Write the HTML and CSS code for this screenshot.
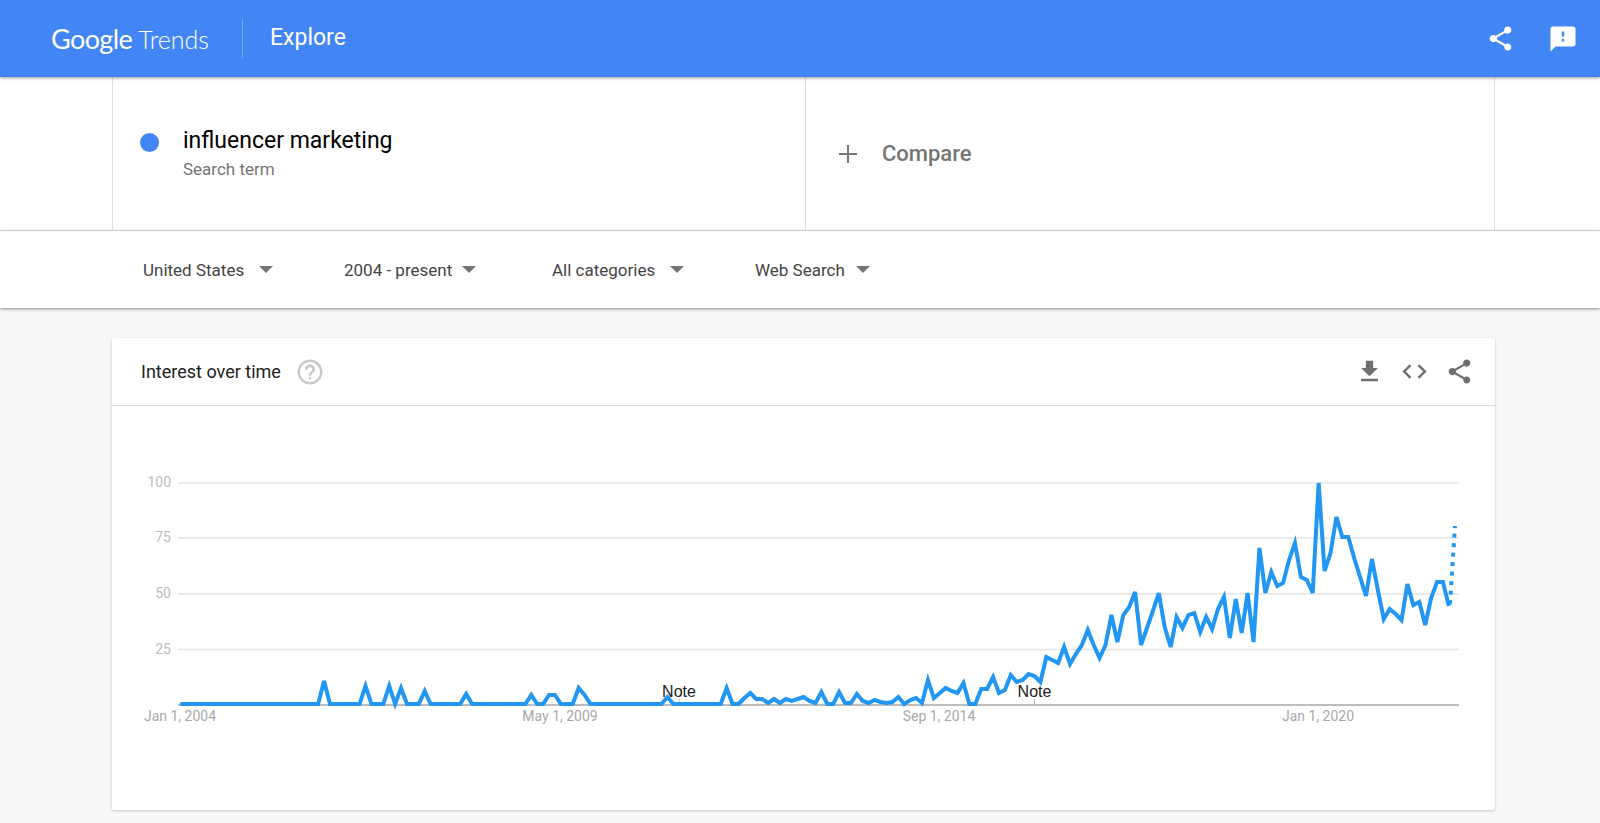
FILE: index.html
```html
<!DOCTYPE html>
<html lang="en">
<head>
<meta charset="utf-8">
<title>Google Trends - Explore</title>
<link rel="stylesheet" href="styles.css">
</head>
<body>
<header class="topbar">
  <div class="logo"><span class="logo-g">Google</span><span class="logo-t">Trends</span></div>
  <div class="divider"></div>
  <div class="page-title">Explore</div>
  <div class="top-actions">
    <svg class="top-share" viewBox="0 0 24 24"><path d="M18 16.08c-.76 0-1.44.3-1.96.77L8.91 12.7c.05-.23.09-.46.09-.7s-.04-.47-.09-.7l7.05-4.11c.54.5 1.25.81 2.04.81 1.66 0 3-1.34 3-3s-1.34-3-3-3-3 1.34-3 3c0 .24.04.47.09.7L8.04 9.81C7.5 9.31 6.79 9 6 9c-1.66 0-3 1.34-3 3s1.34 3 3 3c.79 0 1.5-.31 2.04-.81l7.12 4.16c-.05.21-.08.43-.08.65 0 1.61 1.31 2.92 2.92 2.92s2.92-1.31 2.92-2.92-1.31-2.92-2.92-2.92z"/></svg>
    <svg class="top-feedback" viewBox="0 0 24 24"><path d="M20 2H4c-1.1 0-1.99.9-1.99 2L2 22l4-4h14c1.1 0 2-.9 2-2V4c0-1.1-.9-2-2-2zm-7 12h-2v-2h2v2zm0-4h-2V6h2v4z"/></svg>
  </div>
</header>

<section class="search">
  <div class="search-inner">
    <div class="term">
      <span class="dot"></span>
      <div class="term-text">
        <div class="term-name">influencer marketing</div>
        <div class="term-sub">Search term</div>
      </div>
    </div>
    <div class="compare">
      <svg class="plus" viewBox="0 0 18 18"><path d="M8 0h2v8h8v2h-8v8H8v-8H0V8h8z"/></svg>
      <span class="compare-label">Compare</span>
    </div>
  </div>
</section>

<nav class="filters">
  <div class="filter f1"><span>United States</span><i class="arrow"></i></div>
  <div class="filter f2"><span>2004 - present</span><i class="arrow"></i></div>
  <div class="filter f3"><span>All categories</span><i class="arrow"></i></div>
  <div class="filter f4"><span>Web Search</span><i class="arrow"></i></div>
</nav>

<main class="content">
  <article class="card">
    <div class="card-head">
      <h2 class="card-title">Interest over time</h2>
      <svg class="help" viewBox="0 0 24 24"><path d="M11 18h2v-2h-2v2zm1-16C6.48 2 2 6.48 2 12s4.48 10 10 10 10-4.48 10-10S17.52 2 12 2zm0 18c-4.41 0-8-3.59-8-8s3.59-8 8-8 8 3.59 8 8-3.59 8-8 8zm0-14c-2.21 0-4 1.79-4 4h2c0-1.1.9-2 2-2s2 .9 2 2c0 2-3 1.75-3 5h2c0-2.25 3-2.5 3-5 0-2.21-1.79-4-4-4z"/></svg>
      <div class="card-actions">
        <svg class="act" viewBox="0 0 24 24"><path d="M19 9h-4V3H9v6H5l7 7 7-7zM5 18v2h14v-2H5z"/></svg>
        <svg class="act" viewBox="0 0 24 24"><path d="M9.4 16.6L4.8 12l4.6-4.6L8 6l-6 6 6 6 1.4-1.4zm5.2 0l4.6-4.6-4.6-4.6L16 6l6 6-6 6-1.4-1.4z"/></svg>
        <svg class="act" viewBox="0 0 24 24"><path d="M18 16.08c-.76 0-1.44.3-1.96.77L8.91 12.7c.05-.23.09-.46.09-.7s-.04-.47-.09-.7l7.05-4.11c.54.5 1.25.81 2.04.81 1.66 0 3-1.34 3-3s-1.34-3-3-3-3 1.34-3 3c0 .24.04.47.09.7L8.04 9.81C7.5 9.31 6.79 9 6 9c-1.66 0-3 1.34-3 3s1.34 3 3 3c.79 0 1.5-.31 2.04-.81l7.12 4.16c-.05.21-.08.43-.08.65 0 1.61 1.31 2.92 2.92 2.92s2.92-1.31 2.92-2.92-1.31-2.92-2.92-2.92z"/></svg>
      </div>
    </div>
    <svg class="chart" viewBox="112 406 1383 404">
      <line class="grid" x1="178" y1="483" x2="1459" y2="483"/>
      <line class="grid" x1="178" y1="538" x2="1459" y2="538"/>
      <line class="grid" x1="178" y1="594" x2="1459" y2="594"/>
      <line class="grid" x1="178" y1="649.500" x2="1459" y2="649.500"/>
      <line class="axis" x1="178" y1="705" x2="1459" y2="705"/>
      <line class="tick" x1="679" y1="699" x2="679" y2="705"/>
      <line class="tick" x1="1034.500" y1="699" x2="1034.500" y2="705"/>
      <text class="ylabel" x="171" y="487">100</text>
      <text class="ylabel" x="171" y="542">75</text>
      <text class="ylabel" x="171" y="598">50</text>
      <text class="ylabel" x="171" y="654">25</text>
      <text class="xlabel" x="180" y="721">Jan 1, 2004</text>
      <text class="xlabel" x="560" y="721">May 1, 2009</text>
      <text class="xlabel" x="939" y="721">Sep 1, 2014</text>
      <text class="xlabel" x="1318" y="721">Jan 1, 2020</text>
      <g transform="translate(182 0) scale(5.92 1)">
        <polyline class="trend" points="-0.3,704 23,704 24,681 25,704 30,704 31,686 32,704 34,704 35,686 36,704 37,688 38,704 40,704 41,691 42,704 47,704 48,694 49,704 58,704 59,695 60,704 61,704 62,695 63,695 64,704 66,704 67,688 68,695 69,704 81,704 82,697 83,704 91,704 92,688 93,704 94,704 95,698 96,693 97,699 98,699 99,703 100,699 101,703 102,699 103,701 104,699 105,697 106,701 107,703 108,692 109,704 110,704 111,692 112,703 113,703 114,694 115,701 116,703 117,700 118,702 119,703 120,702 121,697 122,704 123,700 124,698 125,703 126,680 127,698 128,693 129,688 130,691 131,693 132,683 133,704 134,704 135,689 136,689 137,677 138,693 139,690 140,675 141,682 142,680 143,674 144,676 145,682 146,657 147,660 148,663 149,647 150,664 151,654 152,645 153,630 154,645 155,658 156,645 157,615 158,642 159,615 160,607 161,592 162,645 163,628 164,611 165,593 166,627 167,647 168,617 169,628 170,615 171,613 172,632 173,617 174,629 175,609 176,597 177,638 178,599 179,633 180,593 181,642 182,548 183,593 184,572 185,586 186,583 187,560 188,543 189,577 190,580 191,593 192,483 193,571 194,553 195,517 196,537 197,537 198,558 199,577 200,596 201,559 202,590 203,619 204,609 205,614 206,620 207,584 208,605 209,602 210,625 211,598 212,582 213,582 214,606"/>
      </g>
      <line class="trend-dotted" x1="1450" y1="604" x2="1455" y2="526"/>
      <text class="note" x="679" y="697">Note</text>
      <text class="note" x="1034.500" y="697">Note</text>
    </svg>
  </article>
</main>
</body>
</html>
```

FILE: styles.css
```css
* { box-sizing: border-box; }
html, body { margin: 0; padding: 0; }
body {
  background: #f7f7f7;
  font-family: Roboto, "Liberation Sans", sans-serif;
  min-height: 823px;
  overflow: hidden;
}
.topbar {
  position: relative;
  z-index: 3;
  height: 77px;
  background: #4285f4;
  color: #fff;
  display: flex;
  align-items: center;
  padding-left: 51px;
  box-shadow: 0 1px 3px rgba(0,0,0,.4);
}
.logo { display: flex; align-items: baseline; gap: 6px; width: 191px; height: 32px; }
.logo-g { font: 400 27px/32px Lato, sans-serif; letter-spacing: -.6px; }
.logo-t { font: 300 25px/32px Lato, sans-serif; }
.divider { width: 1px; height: 39px; background: rgba(255,255,255,.3); margin-right: 27px; }
.page-title { font-size: 23px; line-height: 30px; margin-top: -2px; }
.top-actions { margin-left: auto; display: flex; align-items: center; padding-right: 22px; gap: 33px; }
.top-actions svg { fill: #fff; display: block; }
.top-share { width: 29px; height: 29px; }
.top-feedback { width: 30px; height: 30px; }

.search { background: #fff; border-bottom: 1px solid #dcdcdc; height: 154px; }
.search-inner {
  margin: 0 105px 0 112px;
  height: 100%;
  display: grid;
  grid-template-columns: 692px 1fr;
  border-left: 1px solid #dcdcdc;
  border-right: 1px solid #dcdcdc;
}
.term { display: flex; align-items: flex-start; padding: 49px 0 0 27px; }
.dot { width: 19px; height: 19px; border-radius: 50%; background: #4285f4; margin-top: 7px; }
.term-text { margin-left: 24px; }
.term-name { font-size: 23px; line-height: 30px; color: #000; }
.term-sub { font-size: 17px; line-height: 20px; color: #757575; margin-top: 3px; }
.compare { display: flex; align-items: center; border-left: 1px solid #dcdcdc; padding-left: 33px; height: 100%; }
.plus { width: 18px; height: 18px; fill: #757575; margin-right: 25px; }
.compare-label { font-size: 22px; font-weight: 500; color: #757575; }

.filters {
  position: relative;
  z-index: 2;
  height: 77px;
  background: #fff;
  display: flex;
  align-items: center;
  padding-left: 143px;
  box-shadow: 0 1px 3px rgba(0,0,0,.45);
  font-size: 17px;
  color: #444;
}
.filter { display: flex; align-items: center; }
.arrow {
  width: 0; height: 0;
  border-left: 7px solid transparent;
  border-right: 7px solid transparent;
  border-top: 7px solid #757575;
}
.f1 { width: 201px; }
.f1 .arrow { margin-left: 15px; }
.f2 { width: 208px; }
.f2 .arrow { margin-left: 10px; }
.f3 { width: 203px; }
.f3 .arrow { margin-left: 15px; }
.f4 .arrow { margin-left: 11px; }

.content { padding: 30px 105px 13px 112px; }
.card { background: #fff; box-shadow: 0 1px 3px rgba(0,0,0,.2); border-radius: 2px; }
.card-head {
  height: 68px;
  display: flex;
  align-items: center;
  padding: 0 21px 0 29px;
  border-bottom: 1px solid #dcdcdc;
}
.card-title { margin: 0; font-size: 18px; font-weight: 400; color: #212121; }
.help { width: 30px; height: 30px; fill: #c8c8c8; margin-left: 14px; }
.card-actions { margin-left: auto; display: flex; gap: 16px; }
.act { width: 29px; height: 29px; fill: #6f6f6f; display: block; }

.chart { display: block; width: 1383px; height: 404px; }
.grid { stroke: #e4e4e4; stroke-width: 1.5; }
.axis { stroke: #bdbdbd; stroke-width: 2; }
.tick { stroke: #bdbdbd; stroke-width: 1; }
.ylabel { font-size: 14px; fill: #bdbdbd; text-anchor: end; }
.xlabel { font-size: 14px; fill: #a8a8a8; text-anchor: middle; }
.note { font: 16px "Liberation Sans", sans-serif; fill: #212121; text-anchor: middle; }
.trend {
  fill: none;
  stroke: #2196f3;
  stroke-width: 4;
  vector-effect: non-scaling-stroke;
  stroke-linejoin: miter;
}
.trend-dotted { stroke: #2196f3; stroke-width: 4; stroke-dasharray: 4 5.500; }
```
